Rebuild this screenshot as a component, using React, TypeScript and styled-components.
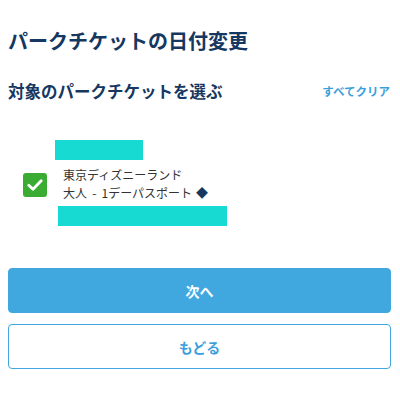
import styled, { createGlobalStyle } from 'styled-components';

const GlobalStyle = createGlobalStyle`
  html, body {
    margin: 0;
    padding: 0;
    background: #fff;
    font-family: 'Noto Sans CJK JP', 'Noto Sans', sans-serif;
  }
`;

const Page = styled.div`
  width: 400px;
  height: 400px;
  box-sizing: border-box;
  padding: 24px 9px 0 8px;
  display: flex;
  flex-direction: column;
`;

const Title = styled.h1`
  margin: 0;
  font-size: 20px;
  line-height: 34px;
  font-weight: 700;
  color: #16375f;
`;

const SectionHead = styled.div`
  display: flex;
  align-items: center;
  justify-content: space-between;
  margin-top: 20px;
`;

const SubTitle = styled.h2`
  margin: 0;
  font-size: 16.5px;
  line-height: 26px;
  font-weight: 700;
  color: #16375f;
`;

const ClearLink = styled.a`
  font-size: 11.5px;
  font-weight: 700;
  color: #3b9fdc;
  margin-right: 1px;
  cursor: pointer;
`;

// チケット一覧
const TicketRow = styled.div`
  display: flex;
  align-items: center;
  margin-top: 36px;
  padding-left: 15px;
`;

const Check = styled.span`
  width: 24px;
  height: 24px;
  margin-top: 3px;
  border-radius: 3px;
  background: #3aac34;
  display: flex;
  align-items: center;
  justify-content: center;
  flex-shrink: 0;
`;

const TicketInfo = styled.div`
  display: flex;
  flex-direction: column;
  margin-left: 8px;
`;

const Mask = styled.div<{ $w: number; $x: number; $top?: number }>`
  width: ${(p) => p.$w}px;
  height: 20px;
  margin-left: ${(p) => p.$x}px;
  margin-top: ${(p) => p.$top ?? 0}px;
  background: #17dbd2;
`;

const TicketLines = styled.div`
  display: flex;
  flex-direction: column;
  margin: 6px 0 0 8px;
  font-size: 12px;
  line-height: 18px;
  color: #333;
`;

const TicketName = styled.span`
  word-spacing: 2.5px;
`;

const Diamond = styled.span`
  color: #16375f;
  margin-left: 4px;
`;

const Buttons = styled.div`
  display: flex;
  flex-direction: column;
  gap: 11px;
  margin-top: 42px;
`;

const Button = styled.button<{ $primary?: boolean }>`
  height: 45px;
  width: 100%;
  border-radius: 4px;
  border: 1px solid #40a8df;
  background: ${(p) => (p.$primary ? '#40a8df' : '#fff')};
  color: ${(p) => (p.$primary ? '#fff' : '#3b9fdc')};
  font-family: inherit;
  font-size: 14px;
  font-weight: 700;
  cursor: pointer;
`;

export default function App() {
  return (
    <>
      <GlobalStyle />
      <Page>
        <Title>パークチケットの日付変更</Title>
        <SectionHead>
          <SubTitle>対象のパークチケットを選ぶ</SubTitle>
          <ClearLink>すべてクリア</ClearLink>
        </SectionHead>

        <TicketRow>
          <Check>
            <svg width='16' height='12' viewBox='0 0 16 12'>
              <path
                d='M1.8 6.2 L6 10.2 L14.2 1.8'
                fill='none'
                stroke='#fff'
                strokeWidth='2.8'
                strokeLinecap='round'
                strokeLinejoin='round'
              />
            </svg>
          </Check>
          <TicketInfo>
            <Mask $w={88} $x={0} />
            <TicketLines>
              <span>東京ディズニーランド</span>
              <TicketName>
                大人 - 1デーパスポート<Diamond>◆</Diamond>
              </TicketName>
            </TicketLines>
            <Mask $w={169} $x={3} $top={4} />
          </TicketInfo>
        </TicketRow>

        <Buttons>
          <Button $primary>次へ</Button>
          <Button>もどる</Button>
        </Buttons>
      </Page>
    </>
  );
}
